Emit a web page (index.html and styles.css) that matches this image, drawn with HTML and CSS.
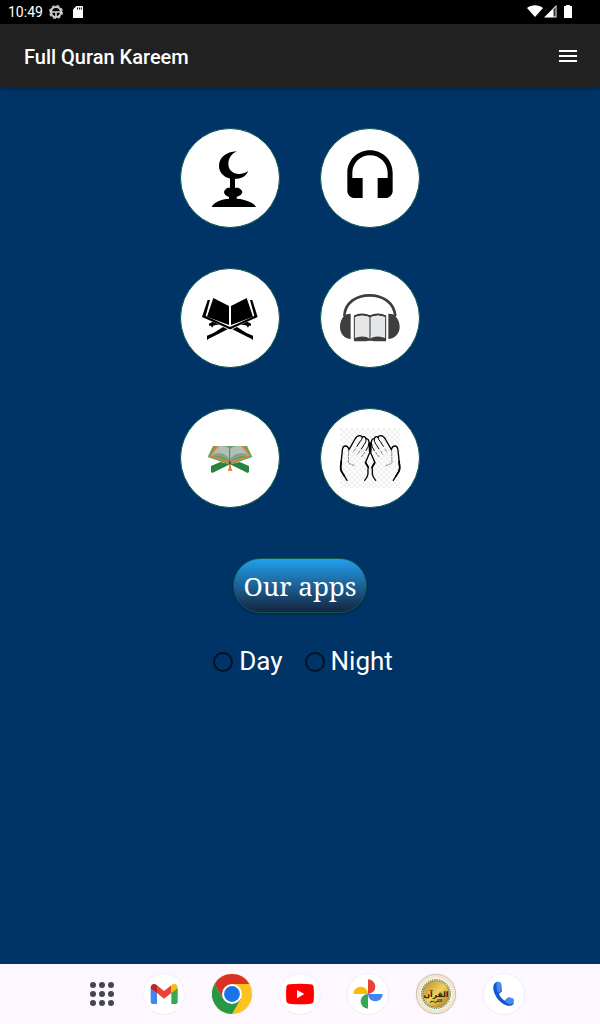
FILE: index.html
```html
<!DOCTYPE html>
<html lang="en">
<head>
    <meta charset="UTF-8">
    <meta name="viewport" content="width=device-width, initial-scale=1.0">
    <title>Full Quran Kareem</title>
    <link rel="stylesheet" href="styles.css">
</head>
<body>
    <div class="status-bar">
        <span class="status-time">10:49</span>
        <svg class="status-icon" width="14" height="14" viewBox="0 0 14 14" fill="none" stroke="#d0d0d0">
            <circle cx="7" cy="7" r="5" stroke-width="2.200"/>
            <circle cx="7" cy="7" r="6.400" stroke-width="1.200" stroke-dasharray="3 2"/>
            <path d="M2 7h10M7 7v5" stroke-width="1.600"/>
        </svg>
        <svg class="status-icon" width="10" height="12" viewBox="0 0 10 12">
            <path d="M3.500 0H9a1 1 0 0 1 1 1v11H0V3.500z" fill="#fff"/>
            <path d="M4.500 1.500v2M6.500 1.500v2M8.300 1.500v2" stroke="#000"/>
        </svg>
        <div class="status-right">
            <svg width="16" height="14" viewBox="0 0 16 14">
                <path d="M0 4C4.500 .2 11.500 .2 16 4L8 13z" fill="#fff"/>
            </svg>
            <svg width="13" height="13" viewBox="0 0 13 13">
                <path d="M0 12.500L12.500 0v12.500z" fill="#fff"/>
                <path d="M9.500 4.500L11.600 2v9.500H9.500z" fill="#333"/>
            </svg>
            <svg class="battery" width="8" height="13" viewBox="0 0 8 13">
                <path d="M0 1h2V0h4v1h2v12H0z" fill="#fff"/>
            </svg>
        </div>
    </div>

    <header class="app-bar">
        <h1 class="app-title">Full Quran Kareem</h1>
        <button class="menu-btn" aria-label="Menu">
            <svg width="18" height="12" viewBox="0 0 18 12" fill="#fff">
                <path d="M0 0h18v2H0zM0 5h18v2H0zM0 10h18v2H0z"/>
            </svg>
        </button>
    </header>

    <main class="content">
        <div class="tile-grid">
            <button class="tile" aria-label="Prayer">
                <svg viewBox="15 18 300 300">
                    <path d="M186 88C152 89 132 108 132 132c0 23 20 39 45 39 22 0 38-9 42-24-10 7-17 9-27 9-19 0-32-13-32-30 0-18 10-31 26-38z"/>
                    <path d="M165 166h15v32h-15zM158 197h32c6 4 12 8 12 13 0 7-8 12-17 15v6h-23v-6c-9-3-15-8-15-15 0-5 5-9 11-13z"/>
                    <path d="M110 255c4-8 12-14 20-17 10-5 20-7 32-8h25c12 1 24 4 32 8 10 4 20 9 24 17z"/>
                </svg>
            </button>
            <button class="tile" aria-label="Listen">
                <svg viewBox="15 18 300 300">
                    <path d="M97 153c0-39 30-68 68-68s68 29 68 68v53c0 12-9 22-22 22h-23v-60h30v-15c0-30-24-53-53-53s-53 23-53 53v15h31v60h-24c-13 0-22-10-22-22z"/>
                </svg>
            </button>
            <button class="tile" aria-label="Read">
                <svg viewBox="15 18 300 300">
                    <path d="M115 108l47 24v57l-66-25zM215 108l-47 24v57l66-25z"/>
                    <path d="M98 114h7l-13 48 66 30q7 5 14 0l66-30-13-48h7l16 51-74 33q-9 8-18 0l-75-33z"/>
                    <path d="M102 185L113 179 132 188 121 189Q114 190 111 197L108 191 102 191zM228 185L217 179 198 188 209 189Q216 190 219 197L222 191 228 191z"/>
                    <path d="M96 221Q114 216 130 204L144 195 158 202 112 225Q103 228 96 234zM234 221Q216 216 200 204L186 195 172 202 218 225Q227 228 234 234z"/>
                </svg>
            </button>
            <button class="tile" aria-label="Audio book">
                <svg viewBox="15 18 300 300" fill="#3e3e40">
                    <path d="M88 162c2-40 36-62 76-62s73 22 77 62" fill="none" stroke="#3e3e40" stroke-width="8"/>
                    <path d="M107 155v76c-18 0-32-16-32-36 0-18 9-37 24-39zM220 155v76c18 0 34-16 34-36 0-18-10-36-24-39z"/>
                    <path d="M118 162q23-9 47 0 24-9 47 0v70q-26-6-47 3-22-9-47-3z" fill="#e4e6e8" stroke="#333" stroke-width="3"/>
                    <path d="M118 163q23-12 47 0 24-12 47 0" fill="none" stroke="#333" stroke-width="5"/>
                    <path d="M165 164v70" stroke="#333" stroke-width="3"/>
                    <path d="M117 229q28-12 48 1 20-13 48-1v9h-36l-12-3-12 3h-36z"/>
                </svg>
            </button>
            <button class="tile" aria-label="Tafsir">
                <svg viewBox="15 18 300 300">
                    <path d="M108 192L136 180 165 187 112 213 108 210zM222 192L194 180 165 187 218 213 222 210z" fill="#27833f"/>
                    <path d="M120 132H114L98 165 165 188 232 165 216 132H210z" fill="#5da35e"/>
                    <path d="M123 132H134L111 161 165 178 219 161 196 132H207L226 163 165 185 104 163z" fill="#ec7d38"/>
                    <path d="M132 132Q156 130 165 141 174 130 198 132L222 162Q179 158 165 178 151 158 108 162z" fill="#b2beb6"/>
                    <path d="M116 156Q149 148 164 172 181 148 214 156L220 162Q179 158 165 178 151 158 110 162z" fill="#879c93"/>
                    <path d="M164 140v42" stroke="#438b5a" stroke-width="3"/>
                    <path d="M161 179h7l-1 10h-5z" fill="#1d5360"/>
                    <path d="M163 185h4l1 10 4 12h-13l3-12z" fill="#f07c32"/>
                </svg>
            </button>
            <button class="tile" aria-label="Dua">
                <svg viewBox="15 18 300 300" fill="none" stroke="#000" stroke-linecap="round" stroke-linejoin="round">
                    <defs>
                        <pattern id="checks" x="75" y="78" width="16" height="16" patternUnits="userSpaceOnUse">
                            <path d="M0 0h8v8H0zM8 8h8v8H8z" fill="#f0f0f0" stroke="none"/>
                        </pattern>
                        <g id="hand">
                            <path d="M96 235L80 209Q76 203 77 193L82 145Q83 132 91 132 99 132 102 143L120 111Q127 100 135 101 141 102 142 106 149 100 153 110 160 109 162 119 167 124 165 133L164 152 151 182 160 196Q158 204 159 212 160 222 149 235" stroke-width="4"/>
                            <path d="M79 178L77 194Q76 203 80 209L88 222M152 182L160 196M163 125L164 148" stroke-width="5"/>
                            <path d="M142 106Q141 114 134 120L126 133M153 110Q155 119 148 127L139 141M162 122Q162 134 153 146" stroke-width="3"/>
                            <path d="M121 141L115 150M134 147L128 157M149 151L139 165M101 145L100 184M103 185Q110 187 118 191" stroke="#444" stroke-width="2" stroke-dasharray="6 4"/>
                        </g>
                    </defs>
                    <rect x="75" y="78" width="180" height="180" fill="url(#checks)" stroke="none"/>
                    <use href="#hand"/>
                    <use href="#hand" transform="translate(331 0) scale(-1 1)"/>
                </svg>
            </button>
        </div>

        <button class="apps-btn">Our apps</button>

        <div class="mode-group">
            <label class="mode" for="day"><input type="radio" name="mode" id="day">Day</label>
            <label class="mode" for="night"><input type="radio" name="mode" id="night">Night</label>
        </div>
    </main>

    <nav class="dock">
        <button class="dock-btn drawer" aria-label="All apps">
            <svg width="24" height="24" viewBox="0 0 24 24" fill="#45464d">
                <circle cx="3" cy="3" r="3"/><circle cx="12" cy="3" r="3"/><circle cx="21" cy="3" r="3"/>
                <circle cx="3" cy="12" r="3"/><circle cx="12" cy="12" r="3"/><circle cx="21" cy="12" r="3"/>
                <circle cx="3" cy="21" r="3"/><circle cx="12" cy="21" r="3"/><circle cx="21" cy="21" r="3"/>
            </svg>
        </button>
        <button class="dock-btn" aria-label="Gmail">
            <svg viewBox="222 57 120 120">
                <path d="M242 98l19 14v35h-13q-6 0-6-6z" fill="#4285f4"/>
                <path d="M323 98l-19 14v35h13q6 0 6-6z" fill="#34a853"/>
                <path d="M261 91l21 17 22-17v23l-22 17-21-17z" fill="#ea4335"/>
                <path d="M242 98c0-11 11-15 19-7v23l-19-14z" fill="#c5221f"/>
                <path d="M323 98c0-11-11-15-19-7v23l19-14z" fill="#fbbc04"/>
            </svg>
        </button>
        <button class="dock-btn" aria-label="Chrome">
            <svg viewBox="0 0 48 48">
                <circle cx="24" cy="24" r="24" fill="#fcc31e"/>
                <path d="M3.200 12A24 24 0 0 1 44.800 12H24L13.600 30z" fill="#dc3226"/>
                <path d="M3.200 12A24 24 0 0 0 24 48L34.400 30 24 24 13.600 30z" fill="#279847"/>
                <circle cx="24" cy="24" r="12" fill="#fff"/>
                <circle cx="24" cy="24" r="9.500" fill="#1a73e8"/>
            </svg>
        </button>
        <button class="dock-btn" aria-label="YouTube">
            <svg viewBox="30 57 120 120">
                <path d="M57 88q33-3 66 0 7 1 8 8 2 21 0 42-1 7-8 8-33 3-66 0-7-1-8-8-2-21 0-42 1-7 8-8z" fill="#f00"/>
                <path d="M81 105v25l22-13z" fill="#fff"/>
            </svg>
        </button>
        <button class="dock-btn" aria-label="Photos">
            <svg viewBox="234 57 120 120">
                <path d="M294 73a22 22 0 0 1 0 44z" fill="#ea4335"/>
                <path d="M338 117a22 22 0 0 1-44 0z" fill="#4285f4"/>
                <path d="M294 161a22 22 0 0 1 0-44z" fill="#34a853"/>
                <path d="M250 117a22 22 0 0 1 44 0z" fill="#fbbc04"/>
            </svg>
        </button>
        <button class="dock-btn" aria-label="Full Quran Kareem">
            <svg viewBox="48 57 120 120">
                <defs>
                    <linearGradient id="gold" x2="1" y2="1">
                        <stop offset="0" stop-color="#b88a1c"/>
                        <stop offset=".5" stop-color="#efd060"/>
                        <stop offset="1" stop-color="#a87816"/>
                    </linearGradient>
                </defs>
                <circle cx="108" cy="117" r="59" fill="#f6e7c8" stroke="#c9c2bd" stroke-width="3"/>
                <circle cx="108" cy="117" r="47" fill="#fff"/>
                <circle cx="108" cy="117" r="43" fill="none" stroke="#6a9a99" stroke-width="4" stroke-dasharray="5 2"/>
                <circle cx="108" cy="117" r="40" fill="url(#gold)" stroke="#997024" stroke-width="2"/>
                <text x="108" y="125" class="seal-text">القرآن</text>
                <text x="108" y="140" class="seal-text seal-small">الكريم</text>
            </svg>
        </button>
        <button class="dock-btn" aria-label="Phone">
            <svg viewBox="252 57 120 120">
                <path d="M288 82c-9 5-10 17-6 29 6 19 22 36 40 41 9 2 17-1 20-8l-17-14-11 7c-8-5-14-12-17-20l9-8-6-24q-7-7-12-3z" fill="#0b57d0"/>
                <path d="M290 81q4-2 9 0 4 1 5 6l2 13q1 5-4 8l-7 7q-8-14-5-34zM314 137l7-8q3-3 7-2l10 3q4 2 4 6 0 8-6 12-14 1-22-11z" fill="#4d86f7"/>
            </svg>
        </button>
    </nav>
</body>
</html>
```

FILE: styles.css
```css
* {
    margin: 0;
    padding: 0;
    box-sizing: border-box;
}

body {
    font-family: Roboto, "Open Sans", sans-serif;
    background: #003366;
    color: white;
    min-height: 100vh;
    display: flex;
    flex-direction: column;
}

button {
    border: none;
    background: none;
    font: inherit;
    color: inherit;
    cursor: pointer;
}

svg {
    display: block;
}

.status-bar {
    display: flex;
    align-items: center;
    height: 24px;
    padding: 0 28px 0 8px;
    background: #000;
    font-size: 14px;
}

.status-icon {
    margin-left: 8px;
}

.status-time + .status-icon {
    margin-left: 6px;
    margin-right: 2px;
}

.status-right {
    display: flex;
    align-items: center;
    gap: 1px;
    margin-left: auto;
    padding-bottom: 2px;
}

.battery {
    margin-left: 6px;
}

.app-bar {
    display: flex;
    align-items: center;
    justify-content: space-between;
    height: 64px;
    padding: 0 8px 0 24px;
    background: #212121;
    box-shadow: 0 1px 3px rgba(0, 0, 0, 0.3);
}

.app-title {
    font-size: 20px;
    font-weight: 500;
    padding-top: 2px;
}

.menu-btn {
    display: flex;
    align-items: center;
    justify-content: center;
    width: 48px;
    height: 48px;
}

.content {
    flex: 1;
    display: flex;
    flex-direction: column;
    align-items: center;
    padding: 40px 16px;
}

.tile-grid {
    display: grid;
    grid-template-columns: repeat(2, 100px);
    gap: 40px;
}

.tile {
    height: 100px;
    background: white;
    border: 1px solid #07564f;
    border-radius: 50%;
}

.tile svg {
    width: 100px;
    height: 100px;
    margin: -1px;
}

.apps-btn {
    height: 55px;
    margin-top: 50px;
    padding: 0 9px;
    border: 1px solid #0a5a50;
    border-radius: 28px;
    background: linear-gradient(#22a0ee, #16243f);
    box-shadow: 0 1px 3px rgba(0, 0, 0, 0.3);
    font-family: "Noto Serif", "DejaVu Serif", serif;
    font-size: 26px;
}

.mode-group {
    display: flex;
    gap: 16px;
    margin-top: 32px;
}

.mode {
    display: flex;
    align-items: center;
    gap: 6px;
    padding-left: 6px;
    font-size: 26px;
    line-height: 33px;
}

.mode input {
    appearance: none;
    width: 20px;
    height: 20px;
    border: 2px solid #001429;
    border-radius: 50%;
}

.mode input:checked {
    background: radial-gradient(#001429 40%, transparent 45%);
}

.dock {
    display: flex;
    align-items: center;
    justify-content: center;
    gap: 28px;
    height: 60px;
    background: #fdf8ff;
}

.dock-btn {
    width: 40px;
    height: 40px;
    border-radius: 50%;
    background: white;
    box-shadow: 0 0 2px rgba(0, 0, 0, 0.12);
}

.drawer {
    display: flex;
    align-items: center;
    justify-content: flex-end;
    padding-right: 2px;
    background: none;
    box-shadow: none;
}

.seal-text {
    font-family: "DejaVu Sans", sans-serif;
    font-size: 23px;
    font-weight: 700;
    text-anchor: middle;
    fill: #2b2005;
}

.seal-small {
    font-size: 12px;
}
```
